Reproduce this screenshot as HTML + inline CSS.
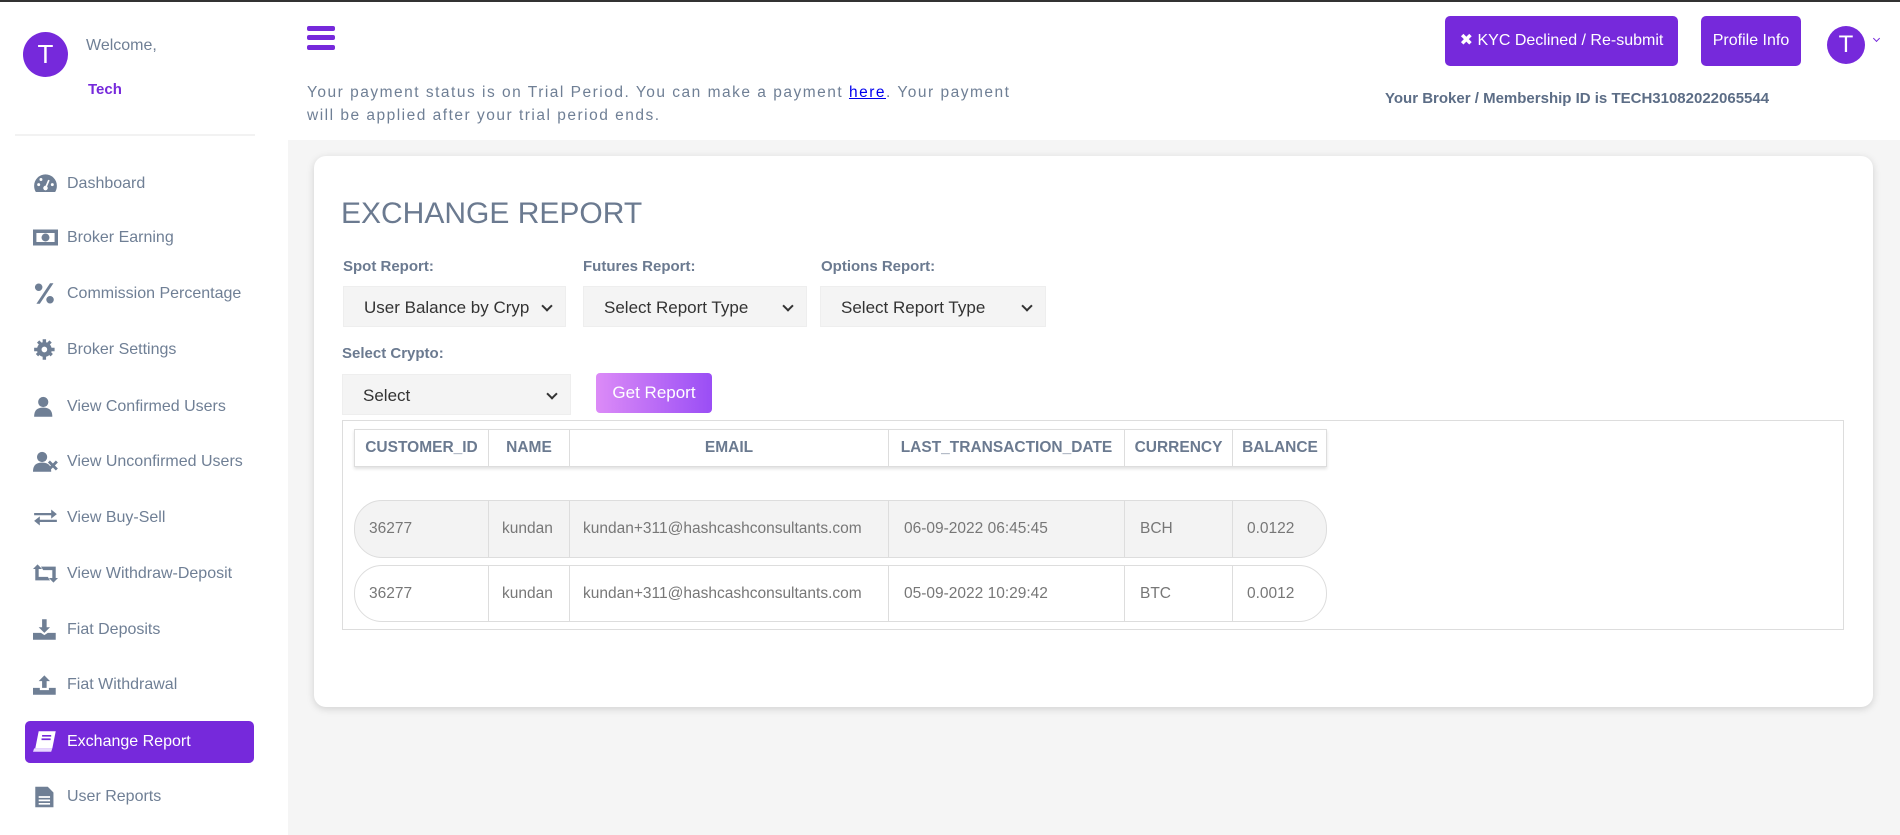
<!DOCTYPE html>
<html><head><meta charset="utf-8"><style>
*{margin:0;padding:0;box-sizing:border-box}
body{width:1900px;height:833px;overflow:hidden;background:#f5f5f5;font-family:"Liberation Sans",sans-serif;position:relative;border-top:2px solid #333}
.a{position:absolute}
#side{left:0;top:0;width:288px;height:833px;background:#fff}
#hdr{left:288px;top:0;width:1612px;height:138px;background:#fff}
.av{border-radius:50%;background:#7629db;color:#fff;text-align:center;font-size:26px}
.mi{position:absolute;left:33px;width:220px;height:42px;color:#6f7f95;font-size:16px;line-height:42px}
.mi svg{position:absolute;left:0;top:10px;width:25px;height:21px;fill:#6f7f95}
.mi span{position:absolute;left:34px}
.btn{background:#7629db;color:#fff;border-radius:5px;font-size:16px;text-align:center}
.lbl{color:#6b7a90;font-weight:bold;font-size:15px}
.sel{background:#f4f4f4;color:#333;font-size:17px;line-height:41px;padding-left:20px;border:1px solid #eee}
.sel:after{content:"";position:absolute;right:14px;top:15px;width:6px;height:6px;border-right:2px solid #333;border-bottom:2px solid #333;transform:rotate(45deg)}
.row{position:absolute;left:354px;width:973px;border:1px solid #ddd;border-radius:28px;color:#777;font-size:15.5px}
.c{position:absolute;top:0;height:100%;border-right:1px solid #ddd;display:flex;align-items:center}
.h{position:absolute;top:0;height:100%;border-right:1px solid #ddd;display:flex;align-items:center;justify-content:center;font-weight:bold;color:#6b7a90;font-size:15.5px}
</style></head><body>
<div id="side" class="a">
<div class="a av" style="left:23px;top:30px;width:45px;height:45px;line-height:45px">T</div>
<div class="a" style="left:86px;top:35px;color:#6f7f95;font-size:16px">Welcome,</div>
<div class="a" style="left:88px;top:79px;color:#7629db;font-size:15px;font-weight:bold">Tech</div>
<div class="a" style="left:15px;top:132px;width:240px;height:2px;background:#f2f2f2"></div>

<div class="mi" style="top:161px"><svg viewBox="0 0 22 18"><path d="M11 1A10 10 0 0 0 1 11c0 2 .5 4 1.5 5.5h17A10 10 0 0 0 21 11 10 10 0 0 0 11 1z"/><circle cx="11" cy="13" r="2" fill="#fff"/><path d="M11 13l3-7" stroke="#fff" stroke-width="1.5"/><circle cx="5" cy="10" r="1.3" fill="#fff"/><circle cx="7" cy="5.5" r="1.3" fill="#fff"/><circle cx="17" cy="10" r="1.3" fill="#fff"/></svg><span>Dashboard</span></div>
<div class="mi" style="top:215px"><svg viewBox="0 0 22 18"><path d="M0 2h22v14H0zM3 5v8h16V5z" fill-rule="evenodd"/><circle cx="11" cy="9" r="3.5"/></svg><span>Broker Earning</span></div>
<div class="mi" style="top:271px"><svg viewBox="0 0 22 18"><circle cx="5" cy="3.5" r="3.3"/><circle cx="15" cy="14.5" r="3.3"/><path d="M15 0h3L6 18H3z"/></svg><span>Commission Percentage</span></div>
<div class="mi" style="top:327px"><svg viewBox="0 0 22 18"><circle cx="10" cy="9" r="6.5"/><path d="M8.5 0h3v18h-3zM1 7.5h18v3H1z"/><path d="M3.5 3l2-2 12 12-2 2zM14.5 1l2 2-12 12-2-2z"/><circle cx="10" cy="9" r="2.5" fill="#fff"/></svg><span>Broker Settings</span></div>
<div class="mi" style="top:384px"><svg viewBox="0 0 22 18"><circle cx="9" cy="5" r="4.5"/><path d="M1 18c0-6 3-8 8-8s8 2 8 8z"/></svg><span>View Confirmed Users</span></div>
<div class="mi" style="top:439px"><svg viewBox="0 0 22 18"><circle cx="8" cy="5" r="4.5"/><path d="M0 18c0-6 3-8 8-8s8 2 8 8z"/><path d="M14 9l7 7M21 9l-7 7" stroke="#6f7f95" stroke-width="2.5"/></svg><span>View Unconfirmed Users</span></div>
<div class="mi" style="top:495px"><svg viewBox="0 0 22 18"><path d="M1 5h15V2l5 4-5 4V7H1zM21 13H6v3l-5-4 5-4v3h15z"/></svg><span>View Buy-Sell</span></div>
<div class="mi" style="top:551px"><svg viewBox="0 0 22 18"><path d="M4 1l4 4H5v7h8l2 3H2V5H0zM18 17l-4-4h3V6H9L7 3h13v10h2z"/></svg><span>View Withdraw-Deposit</span></div>
<div class="mi" style="top:607px"><svg viewBox="0 0 22 18"><path d="M8 0h4v7h3l-5 5-5-5h3zM0 12h7l3 2 3-2h7v6H0z"/></svg><span>Fiat Deposits</span></div>
<div class="mi" style="top:662px"><svg viewBox="0 0 22 18"><path d="M8 12h4V6h3l-5-5-5 5h3zM0 12h6v2h8v-2h6v6H0z"/></svg><span>Fiat Withdrawal</span></div>
<div class="a" style="left:25px;top:719px;width:229px;height:42px;background:#7629db;border-radius:5px"></div>
<div class="mi" style="top:719px;color:#fff"><svg viewBox="0 0 22 18" style="fill:#fff"><path d="M5 0h15l-3 15H2z"/><path d="M1 15h16l-1 3H0z" fill="#e8d8ff"/><path d="M8 4h8M7.5 7h8" stroke="#7629db" stroke-width="1.5"/></svg><span>Exchange Report</span></div>
<div class="mi" style="top:774px"><svg viewBox="0 0 22 18" style="height:24px;top:9px"><path d="M2 0h11l5 5v13H2z"/><path d="M5 9h10M5 12h10M5 15h10" stroke="#fff" stroke-width="1.5"/></svg><span>User Reports</span></div>
</div>

<div id="hdr" class="a">
<div class="a" style="left:19px;top:24px;width:28px;height:5px;background:#7629db;border-radius:2px"></div>
<div class="a" style="left:19px;top:33px;width:28px;height:5px;background:#7629db;border-radius:2px"></div>
<div class="a" style="left:19px;top:43px;width:28px;height:5px;background:#7629db;border-radius:2px"></div>
<div class="a" style="left:19px;top:79px;white-space:nowrap;color:#6f7f95;font-size:15.5px;line-height:23px;letter-spacing:1.5px">Your payment status is on Trial Period. You can make a payment <span style="color:#00e;text-decoration:underline">here</span>. Your payment<br>will be applied after your trial period ends.</div>
<div class="a btn" style="left:1157px;top:14px;width:233px;height:50px;line-height:50px">✖ KYC Declined / Re-submit</div>
<div class="a btn" style="left:1413px;top:14px;width:100px;height:50px;line-height:50px">Profile Info</div>
<div class="a av" style="left:1539px;top:24px;width:38px;height:38px;line-height:38px;font-size:24px">T</div>
<div class="a" style="left:1586px;top:34px;width:5px;height:5px;border-right:1.5px solid #7629db;border-bottom:1.5px solid #7629db;transform:rotate(45deg)"></div>
<div class="a" style="left:1097px;top:88px;color:#5c6d86;font-weight:bold;font-size:15px">Your Broker / Membership ID is TECH31082022065544</div>
</div>

<div class="a" style="left:314px;top:154px;width:1559px;height:551px;background:#fff;border-radius:12px;box-shadow:0 2px 8px rgba(0,0,0,.15)"></div>
<div class="a" style="left:341px;top:195px;color:#6b7a90;font-size:30px">EXCHANGE REPORT</div>
<div class="a lbl" style="left:343px;top:256px">Spot Report:</div>
<div class="a lbl" style="left:583px;top:256px">Futures Report:</div>
<div class="a lbl" style="left:821px;top:256px">Options Report:</div>
<div class="a sel" style="left:343px;top:284px;width:223px;height:41px">User Balance by Cryp</div>
<div class="a sel" style="left:583px;top:284px;width:224px;height:41px">Select Report Type</div>
<div class="a sel" style="left:820px;top:284px;width:226px;height:41px">Select Report Type</div>
<div class="a lbl" style="left:342px;top:343px">Select Crypto:</div>
<div class="a sel" style="left:342px;top:372px;width:229px;height:41px">Select</div>
<div class="a" style="left:596px;top:371px;width:116px;height:40px;border-radius:4px;background:linear-gradient(90deg,#dc8bf7,#9a4ef5);color:#fff;font-size:17px;line-height:40px;text-align:center">Get Report</div>

<div class="a" style="left:342px;top:418px;width:1502px;height:210px;border:1px solid #ddd"></div>
<div class="a" style="left:354px;top:427px;width:973px;height:38px;border:1px solid #ddd;box-shadow:0 2px 3px rgba(0,0,0,.12);background:#fff">
<div class="h" style="left:0;width:134px">CUSTOMER_ID</div>
<div class="h" style="left:134px;width:81px">NAME</div>
<div class="h" style="left:215px;width:319px">EMAIL</div>
<div class="h" style="left:534px;width:236px">LAST_TRANSACTION_DATE</div>
<div class="h" style="left:770px;width:108px">CURRENCY</div>
<div class="h" style="left:878px;width:94px;border:0">BALANCE</div>
</div>
<div class="row" style="top:498px;height:58px;background:#f3f3f3">
<div class="c" style="left:0;width:134px;padding-left:14px">36277</div>
<div class="c" style="left:134px;width:81px;padding-left:13px">kundan</div>
<div class="c" style="left:215px;width:319px;padding-left:13px">kundan+311@hashcashconsultants.com</div>
<div class="c" style="left:534px;width:236px;padding-left:15px">06-09-2022 06:45:45</div>
<div class="c" style="left:770px;width:108px;padding-left:15px">BCH</div>
<div class="c" style="left:878px;width:94px;padding-left:14px;border:0">0.0122</div>
</div>
<div class="row" style="top:563px;height:57px;background:#fff">
<div class="c" style="left:0;width:134px;padding-left:14px">36277</div>
<div class="c" style="left:134px;width:81px;padding-left:13px">kundan</div>
<div class="c" style="left:215px;width:319px;padding-left:13px">kundan+311@hashcashconsultants.com</div>
<div class="c" style="left:534px;width:236px;padding-left:15px">05-09-2022 10:29:42</div>
<div class="c" style="left:770px;width:108px;padding-left:15px">BTC</div>
<div class="c" style="left:878px;width:94px;padding-left:14px;border:0">0.0012</div>
</div>
</body></html>
